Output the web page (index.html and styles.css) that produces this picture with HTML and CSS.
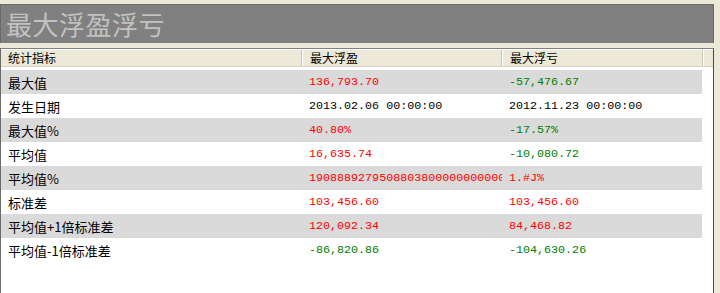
FILE: index.html
```html
<!DOCTYPE html>
<html lang="zh">
<head>
<meta charset="utf-8">
<link rel="stylesheet" href="styles.css">
</head>
<body>
<div class="title">最大浮盈浮亏</div>
<div class="list">
  <div class="header">
    <div class="hcell c1">统计指标</div>
    <div class="hcell c2">最大浮盈</div>
    <div class="hcell c3">最大浮亏</div>
    <div class="hcell c4"></div>
  </div>
  <div class="rows">
    <div class="row alt"><div class="cell c1">最大值</div><div class="cell c2 num red">136,793.70</div><div class="cell c3 num green">-57,476.67</div></div>
    <div class="row"><div class="cell c1">发生日期</div><div class="cell c2 num">2013.02.06 00:00:00</div><div class="cell c3 num">2012.11.23 00:00:00</div></div>
    <div class="row alt"><div class="cell c1">最大值%</div><div class="cell c2 num red">40.80%</div><div class="cell c3 num green">-17.57%</div></div>
    <div class="row"><div class="cell c1">平均值</div><div class="cell c2 num red">16,635.74</div><div class="cell c3 num green">-10,080.72</div></div>
    <div class="row alt"><div class="cell c1">平均值%</div><div class="cell c2 num red">190888927950880380000000000000</div><div class="cell c3 num red">1.#J%</div></div>
    <div class="row"><div class="cell c1">标准差</div><div class="cell c2 num red">103,456.60</div><div class="cell c3 num red">103,456.60</div></div>
    <div class="row alt"><div class="cell c1">平均值+1倍标准差</div><div class="cell c2 num red">120,092.34</div><div class="cell c3 num red">84,468.82</div></div>
    <div class="row"><div class="cell c1">平均值-1倍标准差</div><div class="cell c2 num green">-86,820.86</div><div class="cell c3 num green">-104,630.26</div></div>
  </div>
</div>
</body>
</html>
```

FILE: styles.css
```css
html, body {
  margin: 0;
  padding: 0;
  background: #ece9d8;
  height: 293px;
  overflow: hidden;
  font-family: "Noto Sans CJK SC", "Noto Sans", sans-serif;
  font-size: 13px;
  color: #000;
}
.title {
  margin: 4px 6px 0 0;
  background: #808080;
  border-top: 1px solid #6a6a6a;
  border-left: 1px solid #6a6a6a;
  border-right: 1px solid #6a6a6a;
  color: #c2c2c2;
  font-family: "Noto Sans CJK SC", sans-serif;
  font-weight: 400;
  font-size: 26px;
  line-height: 38px;
  padding-left: 5px;
  letter-spacing: 0.5px;
  box-sizing: border-box;
  height: 39px;
}
.list {
  margin: 5px 6px 0 0;
  background: #fff;
  border-top: 1px solid #808080;
  border-left: 1px solid #6b6b6b;
  border-right: 1px solid #4a4a4a;
  height: 244px;
}
.header {
  display: flex;
  height: 16px;
  background: #ece9d8;
  border-bottom: 1px solid #d6d2c2;
  border-top: 1px solid #fff;
  font-size: 12px;
}
.hcell {
  height: 16px;
  line-height: 16px;
  padding-left: 7px;
  box-sizing: border-box;
  border-right: 1px solid #c7c5b2;
  white-space: nowrap;
}
.header .c1 { width: 301px; }
.header .c2 { width: 200px; border-left: 1px solid #fff; }
.header .c3 { width: 201px; border-left: 1px solid #fff; }
.header .c4 { flex: 1; border-left: 1px solid #fff; border-right: none; }
.rows {
  padding-top: 3px;
}
.row {
  display: flex;
  width: 701px;
  height: 24px;
  align-items: center;
}
.row.alt {
  background: #dadada;
}
.cell {
  box-sizing: border-box;
  padding-left: 7px;
  white-space: nowrap;
  overflow: hidden;
}
.row .c1 { width: 301px; }
.row .c2 { width: 200px; }
.row .c3 { width: 200px; }
.num {
  font-family: "Liberation Mono", "DejaVu Sans Mono", monospace;
  font-size: 11.7px;
}
.red { color: #ff0000; }
.green { color: #008000; }
```
